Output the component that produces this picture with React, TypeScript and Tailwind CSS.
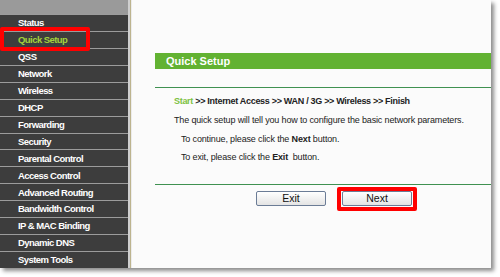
import React from "react";

const items = [
  "Status",
  "Quick Setup",
  "QSS",
  "Network",
  "Wireless",
  "DHCP",
  "Forwarding",
  "Security",
  "Parental Control",
  "Access Control",
  "Advanced Routing",
  "Bandwidth Control",
  "IP & MAC Binding",
  "Dynamic DNS",
  "System Tools",
];

export default function App() {
  return (
    <div
      className="w-[500px] h-[277px] bg-white overflow-hidden"
      style={{ fontFamily: '"Liberation Sans", Arial, sans-serif' }}
    >
      <div className="relative flex w-[491px] h-[268px] bg-[#fbfbfb] shadow-[3px_3px_4px_rgba(0,0,0,0.45)]">
        {/* Sidebar */}
        <div className="w-[128px] flex flex-col bg-[#3d3d3d] shrink-0">
          <div className="h-[14px] bg-[#9a9a9a]" />
          {items.map((it) => (
            <div
              key={it}
              className={`h-[17px] border-t border-[#9c9c9c] pl-[18px] flex items-center text-[9.5px] tracking-[-0.55px] font-bold leading-none whitespace-nowrap ${
                it === "Quick Setup" ? "text-[#a3d23c]" : "text-white"
              }`}
            >
              {it}
            </div>
          ))}
        </div>
        <div className="w-[2px] bg-[#cfcfcf] shrink-0" />
        <div className="w-[1px] bg-[#bdb48e] shrink-0" />
        <div className="w-[1px] bg-[#ececec] shrink-0" />
        {/* Content */}
        <div className="flex-1 pt-[53px] pl-[23px]">
          <div className="h-[16px] bg-[#62b232] flex items-center pl-[11px] text-white font-bold text-[11px] leading-none">
            Quick Setup
          </div>
          <div className="mt-[18px] h-[1px] bg-[#3f9151]" />
          <div className="pl-[19px] pt-[7px] text-[9px] text-[#222] leading-none whitespace-nowrap">
            <div className="h-[12px] flex items-center font-bold tracking-[-0.3px]">
              <span className="text-[#7cc142]">Start</span>
              <span>&nbsp;&gt;&gt; Internet Access &gt;&gt; WAN / 3G &gt;&gt; Wireless &gt;&gt; Finish</span>
            </div>
            <div className="h-[12px] mt-[7px] flex items-center tracking-[-0.15px]">
              The quick setup will tell you how to configure the basic network parameters.
            </div>
            <div className="h-[12px] mt-[7px] pl-[7px] flex items-center tracking-[-0.15px]">
              To continue, please click the&nbsp;<b>Next</b>&nbsp;button.
            </div>
            <div className="h-[12px] mt-[6px] pl-[7px] flex items-center tracking-[-0.15px]">
              To exit, please click the&nbsp;<b>Exit</b>&nbsp;&nbsp;button.
            </div>
          </div>
          <div className="mt-[21px] h-[1px] bg-[#3f9151]" />
          <div className="flex pl-[101px] pt-[6px] gap-[16px]">
            <div className="w-[70px] h-[15px] border border-[#6b7c96] rounded-[2px] bg-gradient-to-b from-white to-[#e4e4e4] flex items-center justify-center text-[10.5px] text-[#111] leading-none">
              Exit
            </div>
            <div className="w-[70px] h-[15px] border border-[#6b7c96] rounded-[2px] bg-gradient-to-b from-white to-[#e4e4e4] flex items-center justify-center text-[10.5px] text-[#111] leading-none">
              Next
            </div>
          </div>
        </div>
        {/* Highlight boxes */}
        <div className="absolute left-[0px] top-[27px] w-[90px] h-[24px] border-[4px] border-[#ff0000] rounded-[2px]" />
        <div className="absolute left-[337px] top-[187px] w-[80px] h-[24px] border-[4px] border-[#ff0000] rounded-[2px]" />
      </div>
    </div>
  );
}
